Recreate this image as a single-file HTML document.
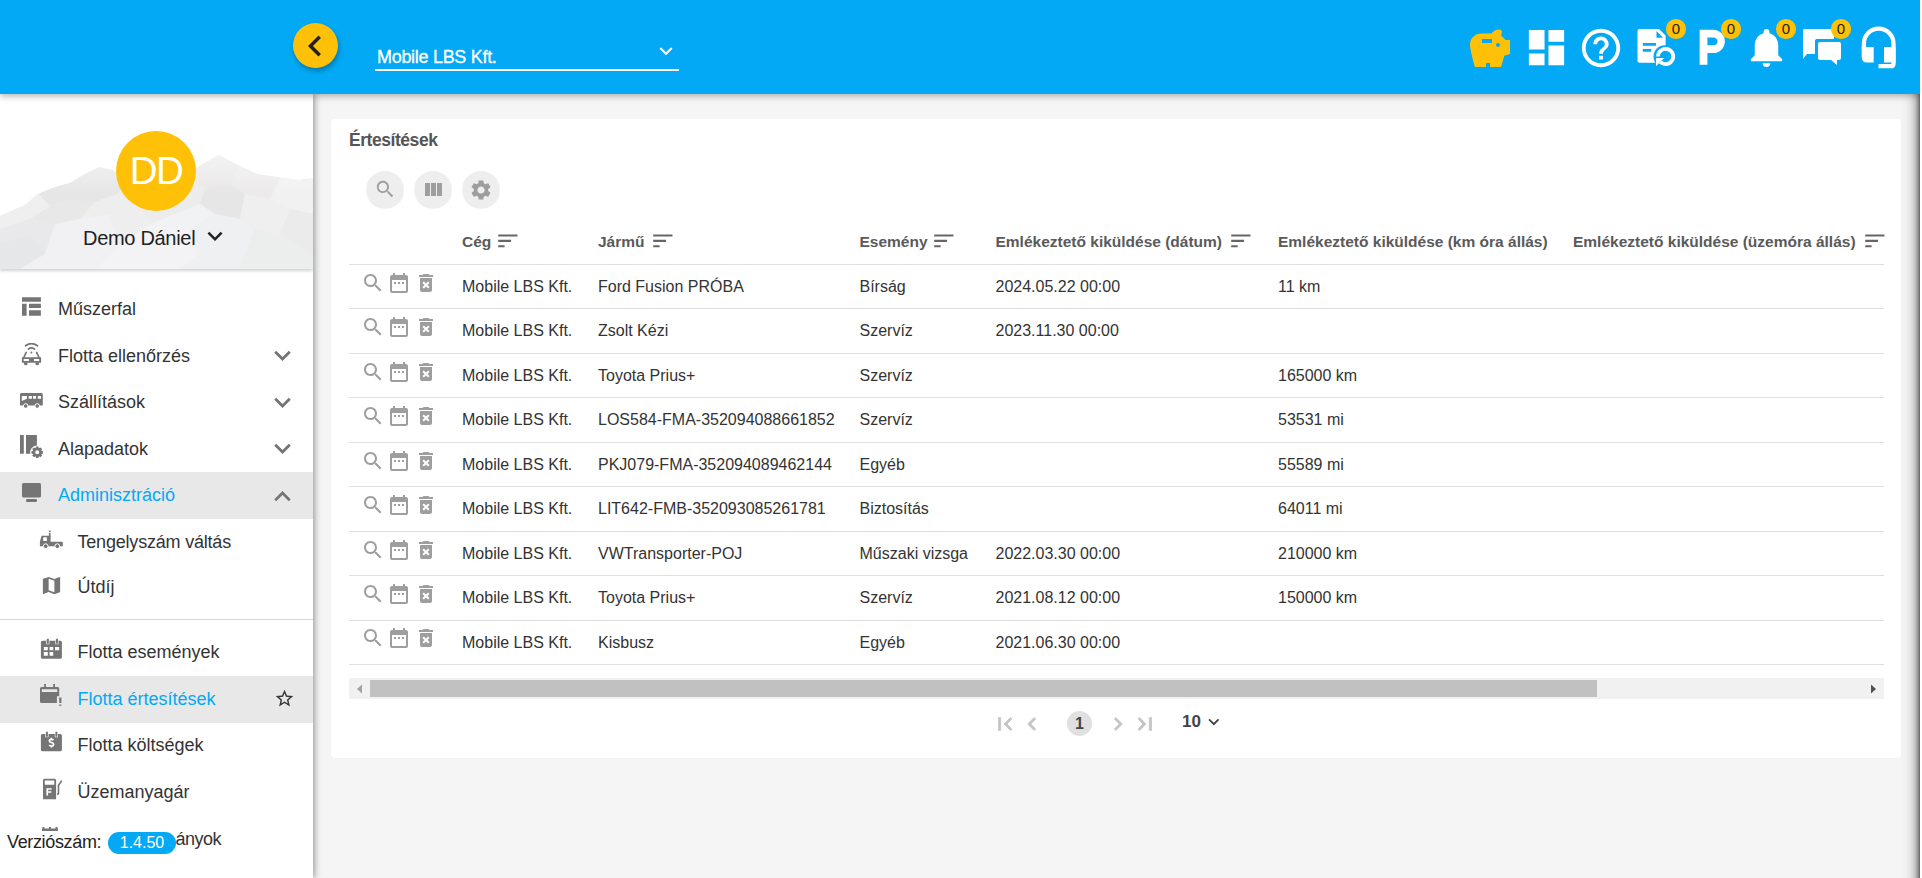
<!DOCTYPE html>
<html><head><meta charset="utf-8">
<style>
*{box-sizing:border-box;margin:0;padding:0}
html,body{width:1922px;height:878px;overflow:hidden;background:#fff;font-family:"Liberation Sans",sans-serif;color:#333}
.abs{position:absolute}
svg{display:block}
#main{position:absolute;left:0;top:0;width:1920px;height:878px;background:#f5f5f5;overflow:hidden}
#hdr{position:absolute;left:0;top:0;width:1920px;height:94px;background:#03a9f4;box-shadow:0 2px 4px -1px rgba(0,0,0,.12),0 4px 5px 0 rgba(0,0,0,.1),0 1px 10px 0 rgba(0,0,0,.1);z-index:5}
#side{position:absolute;left:0;top:94px;width:313px;height:784px;background:#fff;box-shadow:2px 0 4px -1px rgba(0,0,0,.16),4px 0 5px 0 rgba(0,0,0,.12),1px 0 10px 0 rgba(0,0,0,.1);z-index:4;overflow:hidden}
#rshadow{position:absolute;left:1900px;top:94px;width:20px;height:784px;z-index:3;background:linear-gradient(to right,rgba(0,0,0,0) 0%,rgba(0,0,0,0.02) 30%,rgba(0,0,0,0.08) 55%,rgba(0,0,0,0.2) 75%,rgba(0,0,0,0.4) 90%,rgba(0,0,0,0.6) 100%)}
#card{position:absolute;left:331px;top:119px;width:1570px;height:639px;background:#fff;border-radius:4px;box-shadow:0 0 1px rgba(0,0,0,.06)}
.mi{position:absolute;left:0;width:313px;height:46.5px;line-height:46px;font-size:18px;color:#333;white-space:nowrap}
.mi .t{position:absolute;left:58px;top:0}
.mi.sub .t{left:77.5px}
.mi.act{background:#e8e8e8;height:46.8px}
.mi.act .t{color:#03a9f4}
.mi svg{position:absolute;fill:#757575}
.th{position:absolute;top:228px;height:28px;line-height:28px;font-size:15.5px;font-weight:bold;color:#5a5a5a;white-space:nowrap}
.td{position:absolute;font-size:16px;color:#333;white-space:nowrap;line-height:20px}
.hl{position:absolute;left:349px;width:1535px;height:1px;background:#e0e0e0}
.ic{position:absolute;fill:#9e9e9e}
.badge{position:absolute;width:19.5px;height:19.5px;margin:-0.75px 0 0 -0.75px;border-radius:50%;background:#ffc107;color:#222;font-size:15px;line-height:19.5px;text-align:center}
</style></head><body>
<div id="main">
  <div id="card"></div>
<div class="abs" style="left:349px;top:128.3px;font-size:17.5px;line-height:24px;font-weight:bold;color:#555;letter-spacing:-0.45px;white-space:nowrap">Értesítések</div>
<div class="abs" style="left:366px;top:170.5px;width:38px;height:38px;border-radius:50%;background:#eee"></div>
<div class="abs" style="left:414px;top:170.5px;width:38px;height:38px;border-radius:50%;background:#eee"></div>
<div class="abs" style="left:462px;top:170.5px;width:38px;height:38px;border-radius:50%;background:#eee"></div>
<svg class="abs" style="left:373.5px;top:178px" width="22.5" height="22.5" viewBox="0 0 24 24"><path fill="#9e9e9e" d="M15.5 14h-.79l-.28-.27C15.41 12.59 16 11.11 16 9.5 16 5.91 13.09 3 9.5 3S3 5.91 3 9.5 5.91 16 9.5 16c1.61 0 3.09-.59 4.23-1.57l.27.28v.79l5 4.99L20.49 19l-4.99-5zm-6 0C7.01 14 5 11.99 5 9.5S7.01 5 9.5 5 14 7.01 14 9.5 11.99 14 9.5 14z"/></svg>
<svg class="abs" style="left:421px;top:177.5px" width="24" height="24" viewBox="0 0 24 24"><path fill="#9e9e9e" d="M10 18h5V5h-5v13zm-6 0h5V5H4v13zM16 5v13h5V5h-5z"/></svg>
<svg class="abs" style="left:469px;top:177.5px" width="24" height="24" viewBox="0 0 24 24"><path fill="#9e9e9e" d="M19.14,12.94c0.04-0.3,0.06-0.61,0.06-0.94c0-0.32-0.02-0.64-0.07-0.94l2.03-1.58c0.18-0.14,0.23-0.41,0.12-0.61 l-1.92-3.32c-0.12-0.22-0.37-0.29-0.59-0.22l-2.39,0.96c-0.5-0.38-1.03-0.7-1.62-0.94L14.4,2.81c-0.04-0.24-0.24-0.41-0.48-0.41 h-3.84c-0.24,0-0.43,0.17-0.47,0.41L9.25,5.35C8.66,5.59,8.12,5.92,7.63,6.29L5.24,5.33c-0.22-0.08-0.47,0-0.59,0.22L2.74,8.87 C2.62,9.08,2.66,9.34,2.86,9.48l2.030,1.58C4.84,11.36,4.8,11.69,4.8,12s0.02,0.64,0.07,0.94l-2.03,1.58 c-0.18,0.14-0.23,0.41-0.12,0.61l1.92,3.32c0.12,0.22,0.37,0.29,0.59,0.22l2.39-0.96c0.5,0.38,1.03,0.7,1.62,0.94l0.36,2.54 c0.05,0.24,0.24,0.41,0.48,0.41h3.84c0.24,0,0.44-0.17,0.47-0.41l0.36-2.54c0.59-0.24,1.13-0.56,1.62-0.94l2.39,0.96 c0.22,0.08,0.47,0,0.59-0.22l1.92-3.32c0.12-0.22,0.07-0.47-0.12-0.61L19.14,12.94z M12,15.6c-1.98,0-3.6-1.62-3.6-3.6 s1.62-3.6,3.6-3.6s3.6,1.62,3.6,3.6S13.98,15.6,12,15.6z"/></svg>
<div class="th" style="left:462px">Cég</div>
<svg class="abs" style="left:494.9px;top:227.7px" width="25.7" height="25.7" viewBox="0 0 24 24"><path fill="#666" d="M3 18h6v-2H3v2zM3 6v2h18V6H3zm0 7h12v-2H3v2z"/></svg>
<div class="th" style="left:598px">Jármű</div>
<svg class="abs" style="left:649.9px;top:227.7px" width="25.7" height="25.7" viewBox="0 0 24 24"><path fill="#666" d="M3 18h6v-2H3v2zM3 6v2h18V6H3zm0 7h12v-2H3v2z"/></svg>
<div class="th" style="left:859.5px">Esemény</div>
<svg class="abs" style="left:930.9px;top:227.7px" width="25.7" height="25.7" viewBox="0 0 24 24"><path fill="#666" d="M3 18h6v-2H3v2zM3 6v2h18V6H3zm0 7h12v-2H3v2z"/></svg>
<div class="th" style="left:995.5px">Emlékeztető kiküldése (dátum)</div>
<svg class="abs" style="left:1227.9px;top:227.7px" width="25.7" height="25.7" viewBox="0 0 24 24"><path fill="#666" d="M3 18h6v-2H3v2zM3 6v2h18V6H3zm0 7h12v-2H3v2z"/></svg>
<div class="th" style="left:1278px">Emlékeztető kiküldése (km óra állás)</div>
<div class="th" style="left:1573px">Emlékeztető kiküldése (üzemóra állás)</div>
<svg class="abs" style="left:1861.9px;top:227.7px" width="25.7" height="25.7" viewBox="0 0 24 24"><path fill="#666" d="M3 18h6v-2H3v2zM3 6v2h18V6H3zm0 7h12v-2H3v2z"/></svg>
<div class="hl" style="top:264px"></div>
<svg class="abs" style="left:361px;top:270.8px" width="24" height="24" viewBox="0 0 24 24"><path fill="#9e9e9e" d="M15.5 14h-.79l-.28-.27C15.41 12.59 16 11.11 16 9.5 16 5.91 13.09 3 9.5 3S3 5.91 3 9.5 5.91 16 9.5 16c1.61 0 3.09-.59 4.23-1.57l.27.28v.79l5 4.99L20.49 19l-4.99-5zm-6 0C7.01 14 5 11.99 5 9.5S7.01 5 9.5 5 14 7.01 14 9.5 11.99 14 9.5 14z"/></svg>
<svg class="abs" style="left:387px;top:270.8px" width="24" height="24" viewBox="0 0 24 24"><path fill="#9e9e9e" d="M9 11H7v2h2v-2zm4 0h-2v2h2v-2zm4 0h-2v2h2v-2zm2-7h-1V2h-2v2H8V2H6v2H5c-1.11 0-1.99.9-1.99 2L3 20c0 1.1.89 2 2 2h14c1.1 0 2-.9 2-2V6c0-1.1-.9-2-2-2zm0 16H5V9h14v11z"/></svg>
<svg class="abs" style="left:414px;top:270.8px" width="24" height="24" viewBox="0 0 24 24"><path fill="#9e9e9e" d="M6 19c0 1.1.9 2 2 2h8c1.1 0 2-.9 2-2V7H6v12zm2.46-7.12l1.41-1.41L12 12.59l2.12-2.12 1.41 1.41L13.41 14l2.12 2.12-1.41 1.41L12 15.41l-2.12 2.12-1.41-1.41L10.59 14l-2.13-2.12zM15.5 4l-1-1h-5l-1 1H5v2h14V4z"/></svg>
<div class="td" style="left:462px;top:277px">Mobile LBS Kft.</div>
<div class="td" style="left:598px;top:277px">Ford Fusion PRÓBA</div>
<div class="td" style="left:859.5px;top:277px">Bírság</div>
<div class="td" style="left:995.5px;top:277px">2024.05.22 00:00</div>
<div class="td" style="left:1278px;top:277px">11 km</div>
<div class="hl" style="top:308.45px"></div>
<svg class="abs" style="left:361px;top:315.25px" width="24" height="24" viewBox="0 0 24 24"><path fill="#9e9e9e" d="M15.5 14h-.79l-.28-.27C15.41 12.59 16 11.11 16 9.5 16 5.91 13.09 3 9.5 3S3 5.91 3 9.5 5.91 16 9.5 16c1.61 0 3.09-.59 4.23-1.57l.27.28v.79l5 4.99L20.49 19l-4.99-5zm-6 0C7.01 14 5 11.99 5 9.5S7.01 5 9.5 5 14 7.01 14 9.5 11.99 14 9.5 14z"/></svg>
<svg class="abs" style="left:387px;top:315.25px" width="24" height="24" viewBox="0 0 24 24"><path fill="#9e9e9e" d="M9 11H7v2h2v-2zm4 0h-2v2h2v-2zm4 0h-2v2h2v-2zm2-7h-1V2h-2v2H8V2H6v2H5c-1.11 0-1.99.9-1.99 2L3 20c0 1.1.89 2 2 2h14c1.1 0 2-.9 2-2V6c0-1.1-.9-2-2-2zm0 16H5V9h14v11z"/></svg>
<svg class="abs" style="left:414px;top:315.25px" width="24" height="24" viewBox="0 0 24 24"><path fill="#9e9e9e" d="M6 19c0 1.1.9 2 2 2h8c1.1 0 2-.9 2-2V7H6v12zm2.46-7.12l1.41-1.41L12 12.59l2.12-2.12 1.41 1.41L13.41 14l2.12 2.12-1.41 1.41L12 15.41l-2.12 2.12-1.41-1.41L10.59 14l-2.13-2.12zM15.5 4l-1-1h-5l-1 1H5v2h14V4z"/></svg>
<div class="td" style="left:462px;top:321px">Mobile LBS Kft.</div>
<div class="td" style="left:598px;top:321px">Zsolt Kézi</div>
<div class="td" style="left:859.5px;top:321px">Szervíz</div>
<div class="td" style="left:995.5px;top:321px">2023.11.30 00:00</div>
<div class="hl" style="top:352.9px"></div>
<svg class="abs" style="left:361px;top:359.7px" width="24" height="24" viewBox="0 0 24 24"><path fill="#9e9e9e" d="M15.5 14h-.79l-.28-.27C15.41 12.59 16 11.11 16 9.5 16 5.91 13.09 3 9.5 3S3 5.91 3 9.5 5.91 16 9.5 16c1.61 0 3.09-.59 4.23-1.57l.27.28v.79l5 4.99L20.49 19l-4.99-5zm-6 0C7.01 14 5 11.99 5 9.5S7.01 5 9.5 5 14 7.01 14 9.5 11.99 14 9.5 14z"/></svg>
<svg class="abs" style="left:387px;top:359.7px" width="24" height="24" viewBox="0 0 24 24"><path fill="#9e9e9e" d="M9 11H7v2h2v-2zm4 0h-2v2h2v-2zm4 0h-2v2h2v-2zm2-7h-1V2h-2v2H8V2H6v2H5c-1.11 0-1.99.9-1.99 2L3 20c0 1.1.89 2 2 2h14c1.1 0 2-.9 2-2V6c0-1.1-.9-2-2-2zm0 16H5V9h14v11z"/></svg>
<svg class="abs" style="left:414px;top:359.7px" width="24" height="24" viewBox="0 0 24 24"><path fill="#9e9e9e" d="M6 19c0 1.1.9 2 2 2h8c1.1 0 2-.9 2-2V7H6v12zm2.46-7.12l1.41-1.41L12 12.59l2.12-2.12 1.41 1.41L13.41 14l2.12 2.12-1.41 1.41L12 15.41l-2.12 2.12-1.41-1.41L10.59 14l-2.13-2.12zM15.5 4l-1-1h-5l-1 1H5v2h14V4z"/></svg>
<div class="td" style="left:462px;top:366px">Mobile LBS Kft.</div>
<div class="td" style="left:598px;top:366px">Toyota Prius+</div>
<div class="td" style="left:859.5px;top:366px">Szervíz</div>
<div class="td" style="left:1278px;top:366px">165000 km</div>
<div class="hl" style="top:397.35px"></div>
<svg class="abs" style="left:361px;top:404.15px" width="24" height="24" viewBox="0 0 24 24"><path fill="#9e9e9e" d="M15.5 14h-.79l-.28-.27C15.41 12.59 16 11.11 16 9.5 16 5.91 13.09 3 9.5 3S3 5.91 3 9.5 5.91 16 9.5 16c1.61 0 3.09-.59 4.23-1.57l.27.28v.79l5 4.99L20.49 19l-4.99-5zm-6 0C7.01 14 5 11.99 5 9.5S7.01 5 9.5 5 14 7.01 14 9.5 11.99 14 9.5 14z"/></svg>
<svg class="abs" style="left:387px;top:404.15px" width="24" height="24" viewBox="0 0 24 24"><path fill="#9e9e9e" d="M9 11H7v2h2v-2zm4 0h-2v2h2v-2zm4 0h-2v2h2v-2zm2-7h-1V2h-2v2H8V2H6v2H5c-1.11 0-1.99.9-1.99 2L3 20c0 1.1.89 2 2 2h14c1.1 0 2-.9 2-2V6c0-1.1-.9-2-2-2zm0 16H5V9h14v11z"/></svg>
<svg class="abs" style="left:414px;top:404.15px" width="24" height="24" viewBox="0 0 24 24"><path fill="#9e9e9e" d="M6 19c0 1.1.9 2 2 2h8c1.1 0 2-.9 2-2V7H6v12zm2.46-7.12l1.41-1.41L12 12.59l2.12-2.12 1.41 1.41L13.41 14l2.12 2.12-1.41 1.41L12 15.41l-2.12 2.12-1.41-1.41L10.59 14l-2.13-2.12zM15.5 4l-1-1h-5l-1 1H5v2h14V4z"/></svg>
<div class="td" style="left:462px;top:410px">Mobile LBS Kft.</div>
<div class="td" style="left:598px;top:410px">LOS584-FMA-352094088661852</div>
<div class="td" style="left:859.5px;top:410px">Szervíz</div>
<div class="td" style="left:1278px;top:410px">53531 mi</div>
<div class="hl" style="top:441.8px"></div>
<svg class="abs" style="left:361px;top:448.6px" width="24" height="24" viewBox="0 0 24 24"><path fill="#9e9e9e" d="M15.5 14h-.79l-.28-.27C15.41 12.59 16 11.11 16 9.5 16 5.91 13.09 3 9.5 3S3 5.91 3 9.5 5.91 16 9.5 16c1.61 0 3.09-.59 4.23-1.57l.27.28v.79l5 4.99L20.49 19l-4.99-5zm-6 0C7.01 14 5 11.99 5 9.5S7.01 5 9.5 5 14 7.01 14 9.5 11.99 14 9.5 14z"/></svg>
<svg class="abs" style="left:387px;top:448.6px" width="24" height="24" viewBox="0 0 24 24"><path fill="#9e9e9e" d="M9 11H7v2h2v-2zm4 0h-2v2h2v-2zm4 0h-2v2h2v-2zm2-7h-1V2h-2v2H8V2H6v2H5c-1.11 0-1.99.9-1.99 2L3 20c0 1.1.89 2 2 2h14c1.1 0 2-.9 2-2V6c0-1.1-.9-2-2-2zm0 16H5V9h14v11z"/></svg>
<svg class="abs" style="left:414px;top:448.6px" width="24" height="24" viewBox="0 0 24 24"><path fill="#9e9e9e" d="M6 19c0 1.1.9 2 2 2h8c1.1 0 2-.9 2-2V7H6v12zm2.46-7.12l1.41-1.41L12 12.59l2.12-2.12 1.41 1.41L13.41 14l2.12 2.12-1.41 1.41L12 15.41l-2.12 2.12-1.41-1.41L10.59 14l-2.13-2.12zM15.5 4l-1-1h-5l-1 1H5v2h14V4z"/></svg>
<div class="td" style="left:462px;top:455px">Mobile LBS Kft.</div>
<div class="td" style="left:598px;top:455px">PKJ079-FMA-352094089462144</div>
<div class="td" style="left:859.5px;top:455px">Egyéb</div>
<div class="td" style="left:1278px;top:455px">55589 mi</div>
<div class="hl" style="top:486.25px"></div>
<svg class="abs" style="left:361px;top:493.05px" width="24" height="24" viewBox="0 0 24 24"><path fill="#9e9e9e" d="M15.5 14h-.79l-.28-.27C15.41 12.59 16 11.11 16 9.5 16 5.91 13.09 3 9.5 3S3 5.91 3 9.5 5.91 16 9.5 16c1.61 0 3.09-.59 4.23-1.57l.27.28v.79l5 4.99L20.49 19l-4.99-5zm-6 0C7.01 14 5 11.99 5 9.5S7.01 5 9.5 5 14 7.01 14 9.5 11.99 14 9.5 14z"/></svg>
<svg class="abs" style="left:387px;top:493.05px" width="24" height="24" viewBox="0 0 24 24"><path fill="#9e9e9e" d="M9 11H7v2h2v-2zm4 0h-2v2h2v-2zm4 0h-2v2h2v-2zm2-7h-1V2h-2v2H8V2H6v2H5c-1.11 0-1.99.9-1.99 2L3 20c0 1.1.89 2 2 2h14c1.1 0 2-.9 2-2V6c0-1.1-.9-2-2-2zm0 16H5V9h14v11z"/></svg>
<svg class="abs" style="left:414px;top:493.05px" width="24" height="24" viewBox="0 0 24 24"><path fill="#9e9e9e" d="M6 19c0 1.1.9 2 2 2h8c1.1 0 2-.9 2-2V7H6v12zm2.46-7.12l1.41-1.41L12 12.59l2.12-2.12 1.41 1.41L13.41 14l2.12 2.12-1.41 1.41L12 15.41l-2.12 2.12-1.41-1.41L10.59 14l-2.13-2.12zM15.5 4l-1-1h-5l-1 1H5v2h14V4z"/></svg>
<div class="td" style="left:462px;top:499px">Mobile LBS Kft.</div>
<div class="td" style="left:598px;top:499px">LIT642-FMB-352093085261781</div>
<div class="td" style="left:859.5px;top:499px">Biztosítás</div>
<div class="td" style="left:1278px;top:499px">64011 mi</div>
<div class="hl" style="top:530.7px"></div>
<svg class="abs" style="left:361px;top:537.5px" width="24" height="24" viewBox="0 0 24 24"><path fill="#9e9e9e" d="M15.5 14h-.79l-.28-.27C15.41 12.59 16 11.11 16 9.5 16 5.91 13.09 3 9.5 3S3 5.91 3 9.5 5.91 16 9.5 16c1.61 0 3.09-.59 4.23-1.57l.27.28v.79l5 4.99L20.49 19l-4.99-5zm-6 0C7.01 14 5 11.99 5 9.5S7.01 5 9.5 5 14 7.01 14 9.5 11.99 14 9.5 14z"/></svg>
<svg class="abs" style="left:387px;top:537.5px" width="24" height="24" viewBox="0 0 24 24"><path fill="#9e9e9e" d="M9 11H7v2h2v-2zm4 0h-2v2h2v-2zm4 0h-2v2h2v-2zm2-7h-1V2h-2v2H8V2H6v2H5c-1.11 0-1.99.9-1.99 2L3 20c0 1.1.89 2 2 2h14c1.1 0 2-.9 2-2V6c0-1.1-.9-2-2-2zm0 16H5V9h14v11z"/></svg>
<svg class="abs" style="left:414px;top:537.5px" width="24" height="24" viewBox="0 0 24 24"><path fill="#9e9e9e" d="M6 19c0 1.1.9 2 2 2h8c1.1 0 2-.9 2-2V7H6v12zm2.46-7.12l1.41-1.41L12 12.59l2.12-2.12 1.41 1.41L13.41 14l2.12 2.12-1.41 1.41L12 15.41l-2.12 2.12-1.41-1.41L10.59 14l-2.13-2.12zM15.5 4l-1-1h-5l-1 1H5v2h14V4z"/></svg>
<div class="td" style="left:462px;top:544px">Mobile LBS Kft.</div>
<div class="td" style="left:598px;top:544px">VWTransporter-POJ</div>
<div class="td" style="left:859.5px;top:544px">Műszaki vizsga</div>
<div class="td" style="left:995.5px;top:544px">2022.03.30 00:00</div>
<div class="td" style="left:1278px;top:544px">210000 km</div>
<div class="hl" style="top:575.15px"></div>
<svg class="abs" style="left:361px;top:581.95px" width="24" height="24" viewBox="0 0 24 24"><path fill="#9e9e9e" d="M15.5 14h-.79l-.28-.27C15.41 12.59 16 11.11 16 9.5 16 5.91 13.09 3 9.5 3S3 5.91 3 9.5 5.91 16 9.5 16c1.61 0 3.09-.59 4.23-1.57l.27.28v.79l5 4.99L20.49 19l-4.99-5zm-6 0C7.01 14 5 11.99 5 9.5S7.01 5 9.5 5 14 7.01 14 9.5 11.99 14 9.5 14z"/></svg>
<svg class="abs" style="left:387px;top:581.95px" width="24" height="24" viewBox="0 0 24 24"><path fill="#9e9e9e" d="M9 11H7v2h2v-2zm4 0h-2v2h2v-2zm4 0h-2v2h2v-2zm2-7h-1V2h-2v2H8V2H6v2H5c-1.11 0-1.99.9-1.99 2L3 20c0 1.1.89 2 2 2h14c1.1 0 2-.9 2-2V6c0-1.1-.9-2-2-2zm0 16H5V9h14v11z"/></svg>
<svg class="abs" style="left:414px;top:581.95px" width="24" height="24" viewBox="0 0 24 24"><path fill="#9e9e9e" d="M6 19c0 1.1.9 2 2 2h8c1.1 0 2-.9 2-2V7H6v12zm2.46-7.12l1.41-1.41L12 12.59l2.12-2.12 1.41 1.41L13.41 14l2.12 2.12-1.41 1.41L12 15.41l-2.12 2.12-1.41-1.41L10.59 14l-2.13-2.12zM15.5 4l-1-1h-5l-1 1H5v2h14V4z"/></svg>
<div class="td" style="left:462px;top:588px">Mobile LBS Kft.</div>
<div class="td" style="left:598px;top:588px">Toyota Prius+</div>
<div class="td" style="left:859.5px;top:588px">Szervíz</div>
<div class="td" style="left:995.5px;top:588px">2021.08.12 00:00</div>
<div class="td" style="left:1278px;top:588px">150000 km</div>
<div class="hl" style="top:619.6px"></div>
<svg class="abs" style="left:361px;top:626.4px" width="24" height="24" viewBox="0 0 24 24"><path fill="#9e9e9e" d="M15.5 14h-.79l-.28-.27C15.41 12.59 16 11.11 16 9.5 16 5.91 13.09 3 9.5 3S3 5.91 3 9.5 5.91 16 9.5 16c1.61 0 3.09-.59 4.23-1.57l.27.28v.79l5 4.99L20.49 19l-4.99-5zm-6 0C7.01 14 5 11.99 5 9.5S7.01 5 9.5 5 14 7.01 14 9.5 11.99 14 9.5 14z"/></svg>
<svg class="abs" style="left:387px;top:626.4px" width="24" height="24" viewBox="0 0 24 24"><path fill="#9e9e9e" d="M9 11H7v2h2v-2zm4 0h-2v2h2v-2zm4 0h-2v2h2v-2zm2-7h-1V2h-2v2H8V2H6v2H5c-1.11 0-1.99.9-1.99 2L3 20c0 1.1.89 2 2 2h14c1.1 0 2-.9 2-2V6c0-1.1-.9-2-2-2zm0 16H5V9h14v11z"/></svg>
<svg class="abs" style="left:414px;top:626.4px" width="24" height="24" viewBox="0 0 24 24"><path fill="#9e9e9e" d="M6 19c0 1.1.9 2 2 2h8c1.1 0 2-.9 2-2V7H6v12zm2.46-7.12l1.41-1.41L12 12.59l2.12-2.12 1.41 1.41L13.41 14l2.12 2.12-1.41 1.41L12 15.41l-2.12 2.12-1.41-1.41L10.59 14l-2.13-2.12zM15.5 4l-1-1h-5l-1 1H5v2h14V4z"/></svg>
<div class="td" style="left:462px;top:633px">Mobile LBS Kft.</div>
<div class="td" style="left:598px;top:633px">Kisbusz</div>
<div class="td" style="left:859.5px;top:633px">Egyéb</div>
<div class="td" style="left:995.5px;top:633px">2021.06.30 00:00</div>
<div class="hl" style="top:664.05px"></div>
<div class="abs" style="left:349px;top:678px;width:1535px;height:21px;background:#f1f1f1"></div>
<div class="abs" style="left:370px;top:680px;width:1227px;height:17px;background:#c1c1c1"></div>
<svg class="abs" style="left:355px;top:683px" width="10" height="12" viewBox="0 0 10 12"><path fill="#a3a3a3" d="M7 1.5V10.5L2 6z"/></svg>
<svg class="abs" style="left:1868px;top:683px" width="10" height="12" viewBox="0 0 10 12"><path fill="#505050" d="M3 1.5V10.5L8 6z"/></svg>
<svg class="abs" style="left:991.5px;top:710.5px" width="26" height="26" viewBox="0 0 24 24"><path fill="#c4c4c4" stroke="#c4c4c4" stroke-width="0.7" d="M18.41 16.59L13.82 12l4.59-4.59L17 6l-6 6 6 6zM6 6h2v12H6z"/></svg>
<svg class="abs" style="left:1018.5px;top:710.5px" width="26" height="26" viewBox="0 0 24 24"><path fill="#c4c4c4" stroke="#c4c4c4" stroke-width="0.7" d="M15.41 7.41L14 6l-6 6 6 6 1.41-1.41L10.83 12z"/></svg>
<div class="abs" style="left:1067px;top:711px;width:25px;height:25px;border-radius:50%;background:#e0e0e0;font-size:16px;font-weight:bold;color:#444;text-align:center;line-height:25px">1</div>
<svg class="abs" style="left:1104.5px;top:710.5px" width="26" height="26" viewBox="0 0 24 24"><path fill="#c4c4c4" stroke="#c4c4c4" stroke-width="0.7" d="M10 6L8.59 7.41 13.17 12l-4.58 4.59L10 18l6-6z"/></svg>
<svg class="abs" style="left:1131.5px;top:710.5px" width="26" height="26" viewBox="0 0 24 24"><path fill="#c4c4c4" stroke="#c4c4c4" stroke-width="0.7" d="M5.59 7.41L10.18 12l-4.59 4.59L7 18l6-6-6-6zM16 6h2v12h-2z"/></svg>
<div class="abs" style="left:1182px;top:711px;font-size:17px;font-weight:bold;color:#444;line-height:22px">10</div>
<svg class="abs" style="left:1203.3px;top:711.1px" width="21.6" height="21.6" viewBox="0 0 24 24"><path fill="#444" d="M16.59 8.59L12 13.17 7.41 8.59 6 10l6 6 6-6z"/></svg>
</div>
<div id="rshadow"></div><div class="abs" style="left:1920px;top:0;width:2px;height:878px;background:#fff;z-index:10"></div>
<div id="hdr">
  <div class="abs" style="left:293px;top:23px;width:45px;height:45px;border-radius:50%;background:#ffc107;box-shadow:1px 3px 5px rgba(0,0,0,.3)"></div>
  <svg class="abs" style="left:294px;top:24.5px" width="42" height="42" viewBox="0 0 24 24"><path fill="#212121" d="M15.41 7.41L14 6l-6 6 6 6 1.41-1.41L10.83 12z"/></svg>
  <div class="abs" style="left:377px;top:44.5px;font-size:18px;line-height:24px;color:#fff;letter-spacing:-0.3px;-webkit-text-stroke:0.3px #fff;white-space:nowrap">Mobile LBS Kft.</div>
  <div class="abs" style="left:375px;top:69px;width:304px;height:2px;background:#fff"></div>
  <svg class="abs" style="left:653px;top:37.5px" width="26" height="26" viewBox="0 0 24 24"><path fill="#fff" d="M16.59 8.59L12 13.170 7.41 8.59 6 10l6 6 6-6z"/></svg>
  <!-- piggy -->
  <svg class="abs" style="left:1466px;top:25px" width="48" height="48" viewBox="0 0 24 24"><path fill="#ffc107" d="M19.83 7.5l-2.27-2.27c.07-.42.18-.81.32-1.15.08-.18.12-.37.12-.58 0-.69-.56-1.25-1.25-1.25-1.640 0-3.09.79-4 2h-5C4.46 4.25 2 6.71 2 9.75S4.5 21 4.5 21H10v-2h2v2h5.5l1.68-5.59 2.82-.94V7.5h-2.17zM13 9H8V7h5v2zm3 2c-.55 0-1-.45-1-1s.45-1 1-1 1 .45 1 1-.45 1-1 1z"/></svg>
  <!-- dashboard -->
  <svg class="abs" style="left:1523px;top:24px" width="47" height="47" viewBox="0 0 24 24"><path fill="#fff" d="M3 13h8V3H3v10zm0 8h8v-6H3v6zm10 0h8V11h-8v10zm0-18v6h8V3h-8z"/></svg>
  <!-- help -->
  <svg class="abs" style="left:1578px;top:24.5px" width="46" height="46" viewBox="0 0 24 24"><path fill="#fff" d="M11 18h2v-2h-2v2zm1-16C6.480 2 2 6.48 2 12s4.48 10 10 10 10-4.48 10-10S17.52 2 12 2zm0 18c-4.41 0-8-3.59-8-8s3.59-8 8-8 8 3.59 8 8-3.59 8-8 8zm0-14c-2.21 0-4 1.79-4 4h2c0-1.1.9-2 2-2s2 .9 2 2c0 2-3 1.75-3 5h2c0-2.25 3-2.5 3-5 0-2.21-1.79-4-4-4z"/></svg>
  <!-- doc refresh -->
  <svg class="abs" style="left:1636px;top:28px" width="42" height="42" viewBox="0 0 42 42">
    <path fill="#fff" d="M3.5 1H23L29.6 7.6V34.8H3.5A2 2 0 0 1 1.5 32.8V3A2 2 0 0 1 3.5 1z"/>
    <path fill="#03a9f4" d="M20.5 3v6.8h6.5z M6.8 15h13.2v2.8H6.8z M6.8 21h8.5v2.8H6.8z"/>
    <circle cx="28.8" cy="28.6" r="11.3" fill="#03a9f4"/>
    <path fill="none" stroke="#fff" stroke-width="3.7" d="M21.95 28.5A7.65 7.65 0 1 1 24.2 33.9"/>
    <path fill="#fff" d="M20 30.1H28.1L20 38.2z"/>
  </svg>
  <!-- P -->
  <svg class="abs" style="left:1688px;top:24.2px" width="46.6" height="46.6" viewBox="0 0 24 24"><path fill="#fff" d="M13 3H6v18h4v-6h3c3.31 0 6-2.69 6-6s-2.69-6-6-6zm.2 8H10V7h3.2c1.1 0 2 .9 2 2s-.9 2-2 2z"/></svg>
  <!-- bell -->
  <svg class="abs" style="left:1743px;top:24px" width="47" height="47" viewBox="0 0 24 24"><path fill="#fff" d="M12 22c1.1 0 2-.9 2-2h-4c0 1.1.89 2 2 2zm6-6v-5c0-3.07-1.64-5.64-4.5-6.32V4c0-.83-.67-1.5-1.5-1.5s-1.5.67-1.5 1.5v.68C7.63 5.36 6 7.92 6 11v5l-2 2v1h16v-1l-2-2z"/></svg>
  <!-- chat -->
  <svg class="abs" style="left:1802px;top:29px" width="40" height="37" viewBox="0 0 40 37">
    <path fill="#fff" d="M2 0h29a1 1 0 0 1 1 1v9H15a2 2 0 0 0-2 2v13h-8l-4 5V1a1 1 0 0 1 1-1z"/>
    <path fill="#fff" d="M18 13h19a2 2 0 0 1 2 2v14a2 2 0 0 1-2 2h-2v5l-6-5H18a2 2 0 0 1-2-2V15a2 2 0 0 1 2-2z"/>
  </svg>
  <!-- headset -->
  <svg class="abs" style="left:1861px;top:26px" width="36" height="44" viewBox="0 0 36 44">
    <path fill="none" stroke="#fff" stroke-width="4.3" d="M2.9 24V17.5A14.8 14.8 0 0 1 32.5 17.5V38.2A2 2 0 0 1 30.5 40.2H17.5"/>
    <path fill="#fff" d="M0.7 21h12v15.6H5.7a5 5 0 0 1-5-5z M23 21h11.6v15.6H23z"/>
  </svg>
  <div class="badge" style="left:1667px;top:20px">0</div>
  <div class="badge" style="left:1722px;top:20px">0</div>
  <div class="badge" style="left:1777px;top:20px">0</div>
  <div class="badge" style="left:1832px;top:20px">0</div>
</div>
<div id="side"><div class="abs" style="left:0;top:0;width:313px;height:175px;overflow:hidden;background:#fff;box-shadow:0 2px 3px rgba(0,0,0,.18)"><svg class="abs" style="left:0;top:0" width="313" height="175" viewBox="0 0 313 175">
 <path fill="#ececec" d="M0 122L25 111L38 100L55 93L70 89L85 80L99 73L112 76L125 84L140 86L170 80L196 74L219 61L240 72L257 80L299 86L313 84V175H0z"/>
 <path fill="#e6e6e6" d="M38 100L55 93L70 89L85 80L99 73L112 76L125 84L118 100L95 108L70 106L50 112z"/>
 <path fill="#f0eff0" d="M0 122L25 111L38 100L50 112L30 125L0 135z"/>
 <path fill="#e8e8e9" d="M50 112L70 106L95 108L80 125L55 130L30 125z"/>
 <path fill="#e9e9eb" d="M0 135L30 125L55 130L45 160L20 175H0z"/>
 <path fill="#e6e7e9" d="M0 150L30 140L45 160L20 175H0z"/>
 <path fill="#f1f1f3" d="M55 130L80 125L110 120L120 150L95 175H20L45 160z"/>
 <path fill="#eeeeef" d="M95 108L118 100L140 110L150 130L120 150L110 120L80 125z"/>
 <path fill="#f3f3f5" d="M120 150L150 130L190 135L200 160L180 175H95z"/>
 <path fill="#e9e7e8" d="M196 74L219 61L240 72L230 90L205 95L190 85z"/>
 <path fill="#eceaeb" d="M240 72L257 80L280 84L270 105L245 100L230 90z"/>
 <path fill="#f2f1f1" d="M280 84L299 86L313 84V120L290 115L270 105z"/>
 <path fill="#e7e6e7" d="M205 95L230 90L245 100L240 125L215 120L200 110z"/>
 <path fill="#f0eff0" d="M245 100L270 105L290 115L280 140L255 135L240 125z"/>
 <path fill="#ebebec" d="M290 115L313 120V160L295 150L280 140z"/>
 <path fill="#eef0f2" d="M190 135L215 120L240 125L255 135L240 175H180L200 160z"/>
 <path fill="#eceded" d="M255 135L280 140L295 150L313 160V175H240z"/>
 <path fill="#f1f2f4" d="M150 130L200 110L215 120L190 135z"/>
 <defs><linearGradient id="topfade" x1="0" y1="0" x2="0" y2="1"><stop offset="0" stop-color="#fff" stop-opacity="0.55"/><stop offset="1" stop-color="#fff" stop-opacity="0"/></linearGradient></defs>
 <rect x="0" y="55" width="313" height="45" fill="url(#topfade)"/>
</svg>
  <div class="abs" style="left:116px;top:37px;width:80px;height:80px;border-radius:50%;background:#ffc107;color:#fff;font-size:38.5px;line-height:80px;text-align:center;letter-spacing:-1.5px">DD</div>
  <div class="abs" style="left:83px;top:132px;font-size:20px;line-height:24px;color:#222;white-space:nowrap;letter-spacing:-0.3px">Demo Dániel</div>
  <svg class="abs" style="left:200px;top:127px" width="30" height="30" viewBox="0 0 24 24"><path fill="#222" d="M16.59 8.59L12 13.17 7.41 8.59 6 10l6 6 6-6z"/></svg>
</div><div class="mi" style="top:192px"><svg style="left:22px;top:11px" width="20" height="20" viewBox="0 0 20 20"><path d="M0 0.2h18.9v4.6H0z M0 6.75h4.6V18.7H0z M7 6.75h11.9V11H7z M7 13.3h11.9v5.4H7z"/></svg><span class="t">Műszerfal</span></div><div class="mi" style="top:238.5px"><svg style="left:20px;top:10.5px" width="23" height="23" viewBox="0 0 23 23"><path fill="none" stroke="#757575" stroke-width="1.7" stroke-linecap="round" d="M5.6 2.8Q11.4 -1.6 17.4 2.8 M8.4 6.1Q11.4 3.6 14.6 6.1 M6.2 9.4L3.8 14.5 M16.6 9.4L19 14.5"/><circle cx="11.4" cy="9.4" r="1"/><path fill-rule="evenodd" d="M1.9 14.3h19.2v5.5H1.9z M3.7 16v2h5.2v-2z M14 16v2h5.2v-2z"/><path d="M3.9 19.5h3.7v1a1.6 1.6 0 0 1-1.85 1.6a1.6 1.6 0 0 1-1.85-1.6z M15.4 19.5h3.7v1a1.6 1.6 0 0 1-1.85 1.6a1.6 1.6 0 0 1-1.85-1.6z"/></svg><span class="t">Flotta ellenőrzés</span><svg style="left:265.75px;top:6.7px" width="33" height="33" viewBox="0 0 24 24"><path d="M16.59 8.59L12 13.17 7.41 8.59 6 10l6 6 6-6z"/></svg></div><div class="mi" style="top:285px"><svg style="left:20px;top:13px" width="23" height="17" viewBox="0 0 23 17"><path fill-rule="evenodd" d="M1.5 1h19.8a1.5 1.5 0 0 1 1.5 1.5V13.5H0V2.5A1.5 1.5 0 0 1 1.5 1z M1.8 4v5l5.1-2.3V4z M8.7 4v2.7h3.2V4z M13 4v2.7h3.1V4z M17.8 4v2.7h3.2V4z"/><circle cx="5.7" cy="14" r="2.3" stroke="#fff" stroke-width="1"/><circle cx="17.2" cy="14" r="2.3" stroke="#fff" stroke-width="1"/></svg><span class="t">Szállítások</span><svg style="left:265.75px;top:6.7px" width="33" height="33" viewBox="0 0 24 24"><path d="M16.59 8.59L12 13.17 7.41 8.59 6 10l6 6 6-6z"/></svg></div><div class="mi" style="top:331.5px"><svg style="left:20px;top:8.5px" width="24" height="25" viewBox="0 0 24 25"><path d="M0 1h3.8v18.8H0z M6 1h10.9v10.4A7 7 0 0 0 10.3 19.8H6z"/><path fill-rule="evenodd" d="M22.98 17.13L22.98 19.47L21.27 19.97L21.26 19.99L22.12 21.56L20.46 23.22L18.89 22.36L18.87 22.37L18.37 24.08L16.03 24.08L15.53 22.37L15.51 22.36L13.94 23.22L12.28 21.56L13.14 19.99L13.13 19.97L11.42 19.47L11.42 17.13L13.13 16.63L13.14 16.61L12.28 15.04L13.94 13.38L15.51 14.24L15.53 14.23L16.03 12.52L18.37 12.52L18.87 14.23L18.89 14.24L20.46 13.38L22.12 15.04L21.26 16.61L21.27 16.63z M19.20 18.3A2 2 0 1 0 15.20 18.3A2 2 0 1 0 19.20 18.3z"/></svg><span class="t">Alapadatok</span><svg style="left:265.75px;top:6.7px" width="33" height="33" viewBox="0 0 24 24"><path d="M16.59 8.59L12 13.17 7.41 8.59 6 10l6 6 6-6z"/></svg></div><div class="mi act" style="top:378px"><svg style="left:22px;top:11px" width="19" height="19" viewBox="0 0 19 19"><rect x="0" y="0" width="19" height="14.5" rx="1.5"/><rect x="4" y="16" width="11" height="3" rx="1.2"/></svg><span class="t">Adminisztráció</span><svg style="left:265.75px;top:7.7px" width="33" height="33" viewBox="0 0 24 24"><path d="M12 8l-6 6 1.41 1.41L12 10.83l4.59 4.58L18 14z"/></svg></div><div class="mi sub" style="top:424.5px"><svg style="left:39px;top:11.5px" width="25" height="20" viewBox="0 0 25 20"><path d="M9.9 0.5h1.6v1.4H9.9z M9.9 2.8h1.6v4H9.9z"/><path fill-rule="evenodd" d="M2.5 5.8h9.1v5.9h11.6a0.6 0.6 0 0 1 .6.6v3.9H0.9v-4.2L2.5 5.8z M4.2 7.3v3.7h3.7V7.3z"/><circle cx="6.7" cy="16.2" r="2.4" stroke="#fff" stroke-width="1"/><circle cx="18.3" cy="16.2" r="2.4" stroke="#fff" stroke-width="1"/></svg><span class="t" style="letter-spacing:-0.2px">Tengelyszám váltás</span></div><div class="mi sub" style="top:469.8px"><svg style="left:40px;top:10.1px" width="23" height="23" viewBox="0 0 24 24"><path d="M20.5 3l-.16.03L15 5.1 9 3 3.36 4.9c-.21.07-.36.25-.36.48V20.5c0 .28.22.5.5.5l.16-.03L9 18.9l6 2.1 5.64-1.9c.21-.07.36-.25.36-.48V3.5c0-.28-.22-.5-.5-.5zM15 19l-6-2.11V5l6 2.11V19z"/></svg><span class="t">Útdíj</span></div><div class="mi sub" style="top:535.3px"><svg style="left:40px;top:9px" width="23" height="23" viewBox="0 0 23 23"><path fill-rule="evenodd" d="M2.4 2.8h18a1.5 1.5 0 0 1 1.5 1.5v15a1.5 1.5 0 0 1-1.5 1.5h-18a1.5 1.5 0 0 1-1.5-1.5v-15a1.5 1.5 0 0 1 1.5-1.5z M3.8 9v3.3h4V9z M9.6 9v3.3h3.6V9z M15 9v3.3h4.2V9z M3.8 14.1v3.7h4v-3.7z M9.6 14.1v3.7h3.6v-3.7z"/><path fill="#fff" d="M6.2 2.7h3.2v3.6H6.2z M15.3 2.7h3.2v3.6h-3.2z"/><path d="M6.8 0.8h2v5H6.8z M15.9 0.8h2v5h-2z"/></svg><span class="t">Flotta események</span></div><div class="mi sub act" style="top:581.8px"><svg style="left:39px;top:7.5px" width="24" height="24" viewBox="0 0 24 24"><path fill-rule="evenodd" d="M2.5 4h16.2a1.5 1.5 0 0 1 1.5 1.5v7.7h-2.3V20H2.5A1.5 1.5 0 0 1 1 18.5v-13A1.5 1.5 0 0 1 2.5 4z M2.8 6.3v2.6h15.5V6.3z"/><path d="M5.1 1h1.8v4H5.1z M14.2 1h1.8v4h-1.8z M20.2 14.5h2.2V20h-2.2z M20.2 21.4h2.2v1.4h-2.2z"/></svg><span class="t">Flotta értesítések</span><svg style="left:273.5px;top:12px" width="21" height="21" viewBox="0 0 24 24"><path fill="#333" d="M22 9.24l-7.19-.62L12 2 9.19 8.63 2 9.24l5.46 4.73L5.82 21 12 17.27 18.18 21l-1.63-7.03L22 9.24zM12 15.4l-3.76 2.27 1-4.28-3.32-2.88 4.38-.38L12 6.1l1.71 4.04 4.38.38-3.32 2.88 1 4.28L12 15.4z"/></svg></div><div class="mi sub" style="top:628.3px"><svg style="left:40px;top:9px" width="23" height="23" viewBox="0 0 23 23"><path fill-rule="evenodd" d="M2.4 3h18a1.5 1.5 0 0 1 1.5 1.5v14.3a1.5 1.5 0 0 1-1.5 1.5h-18a1.5 1.5 0 0 1-1.5-1.5V4.5A1.5 1.5 0 0 1 2.4 3z"/><path fill="#fff" d="M5.3 2.9h3.2v3.4H5.3z M14.8 2.9h3.2v3.4h-3.2z"/><path d="M5.9 0.8h2v5H5.9z M15.4 0.8h2v5h-2z"/><path fill="none" stroke="#fff" stroke-width="1.7" d="M13.4 9.2c-.5-.6-1.2-.9-2-.9-1.2 0-2.1.6-2.1 1.6 0 2 4.3 1.2 4.3 3.4 0 1-.9 1.7-2.2 1.7-.9 0-1.7-.4-2.2-1 M11.4 6.7v1.6 M11.4 15v1.4"/></svg><span class="t">Flotta költségek</span></div><div class="mi sub" style="top:674.8px"><svg style="left:42px;top:9px" width="22" height="22" viewBox="0 0 22 22"><path fill-rule="evenodd" d="M2.5 0.7h10.1a1.5 1.5 0 0 1 1.5 1.5V21.3H1V2.2A1.5 1.5 0 0 1 2.5 0.7z M2.8 2.5v4.2h9.5V2.5z M4.4 10.3v7.3h1.7v-2.9h3.3v-1.4H6.1v-1.6h3.6v-1.4z"/><path fill="none" stroke="#757575" stroke-width="1.6" d="M15.2 16.5l1.3-1V7.2l3.3-4.5"/></svg><span class="t">Üzemanyagár</span></div><div class="mi sub" style="top:721.3px"><svg style="left:42px;top:11.3px" width="16" height="6" viewBox="0 0 16 6"><path d="M0.5 0h2v2h-2z M7 0h2v2H7z M13.5 0h2v2h-2z M0 1.5h16V6H0z"/></svg><span class="t" style="left:175.5px;top:1.2px;letter-spacing:-0.5px">ányok</span></div><div class="abs" style="left:0;top:525px;width:313px;height:1px;background:#d6d6d6"></div><div class="abs" style="left:0;top:736.6px;height:48px;width:176px;background:#fff"><span class="abs" style="left:7px;font-size:18px;line-height:24px;top:-0.5px;white-space:nowrap;color:#222;letter-spacing:-0.35px">Verziószám:</span><span class="abs" style="left:108px;top:1.2px;width:68px;height:22px;border-radius:11px;background:#03a9f4;color:#fff;font-size:16px;line-height:22px;text-align:center">1.4.50</span></div></div>
</body></html>
